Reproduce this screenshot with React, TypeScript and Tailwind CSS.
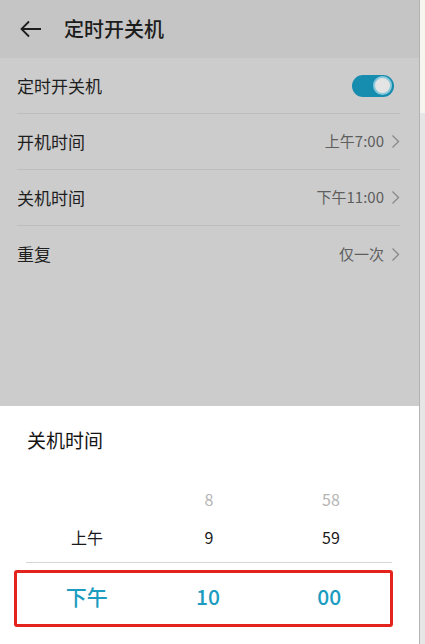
import React from "react";

/**
 * 定时开关机 - 关机时间 picker sheet over the dimmed settings page
 */

const font = { fontFamily: '"Noto Sans CJK SC", "Noto Sans", sans-serif' };

function Chevron() {
  return (
    <svg width="9" height="15" viewBox="0 0 9 15" className="ml-[7px] shrink-0">
      <polyline points="1.5,1.5 7.5,7.5 1.5,13.5" fill="none" stroke="#8a8a8a" strokeWidth="1.4" />
    </svg>
  );
}

function Row({ label, value, last }: { label: string; value: string; last?: boolean }) {
  return (
    <div className={`flex h-[56px] items-center justify-between ${last ? "" : "border-b border-[#bdbdbd]"}`}>
      <span className="text-[17px] text-[#1e1e1e]">{label}</span>
      <div className="flex items-center">
        <span className="text-[15px] text-[#5e5e5e]">{value}</span>
        <Chevron />
      </div>
    </div>
  );
}

export default function App() {
  return (
    <div className="flex h-[644px] w-[425px] overflow-hidden bg-white" style={font}>
      <div className="flex w-[419px] flex-col">
        {/* Header */}
        <header className="flex h-[58px] items-center bg-[#c5c5c5] pl-[19px]">
          <svg width="23" height="18" viewBox="0 0 23 18">
            <path d="M22 9H2.5M10 1.5L2.5 9L10 16.5" fill="none" stroke="#1e1e1e" strokeWidth="1.8" />
          </svg>
          <h1 className="ml-[22px] text-[20px] font-medium text-[#1c1c1c]">定时开关机</h1>
        </header>

        {/* Settings list (dimmed) */}
        <div className="flex-1 bg-[#cccccc] pl-[17px] pr-[19px]">
          <div className="flex h-[56px] items-center justify-between border-b border-[#bdbdbd]">
            <span className="text-[17px] text-[#1e1e1e]">定时开关机</span>
            <div className="mr-[6px] flex h-[22px] w-[42px] items-center justify-end rounded-full bg-[#168cae] pr-[2px]">
              <div className="h-[19px] w-[19px] rounded-full border-2 border-[#8cc9dc] bg-[#e4e4e4]" />
            </div>
          </div>
          <Row label="开机时间" value="上午7:00" />
          <Row label="关机时间" value="下午11:00" />
          <Row label="重复" value="仅一次" last />
        </div>

        {/* Bottom sheet */}
        <div className="h-[238px] bg-white">
          <div className="flex h-[68px] items-center pl-[27px]">
            <h2 className="text-[19px] text-[#151515]">关机时间</h2>
          </div>

          <div className="ml-[26px] w-[366px] pt-[6px]">
            <div className="grid h-[38px] grid-cols-3 items-center text-center text-[16px] text-[#b4b4b4]">
              <span />
              <span>8</span>
              <span>58</span>
            </div>
            <div className="grid h-[37px] grid-cols-3 items-center text-center text-[16px] text-[#1a1a1a]">
              <span>上午</span>
              <span>9</span>
              <span>59</span>
            </div>
            <div className="h-[8px] border-b border-[#d6d6d6]" />
          </div>

          <div className="ml-[14px] mt-[7px] flex h-[57px] w-[379px] items-center rounded-[3px] border-[3px] border-[#e3231c] pb-[4px] pl-[9px]">
            <div className="grid w-[364px] grid-cols-3 text-center text-[21px] font-medium text-[#1b9cc0]">
              <span>下午</span>
              <span>10</span>
              <span>00</span>
            </div>
          </div>
        </div>
      </div>

      {/* Edge of the page behind */}
      <div className="flex w-[6px] flex-col border-l border-[#b3b3b3]">
        <div className="h-[113px] bg-[#f6f6ee]" />
        <div className="flex-1 bg-[#e6e6e6]" />
      </div>
    </div>
  );
}
